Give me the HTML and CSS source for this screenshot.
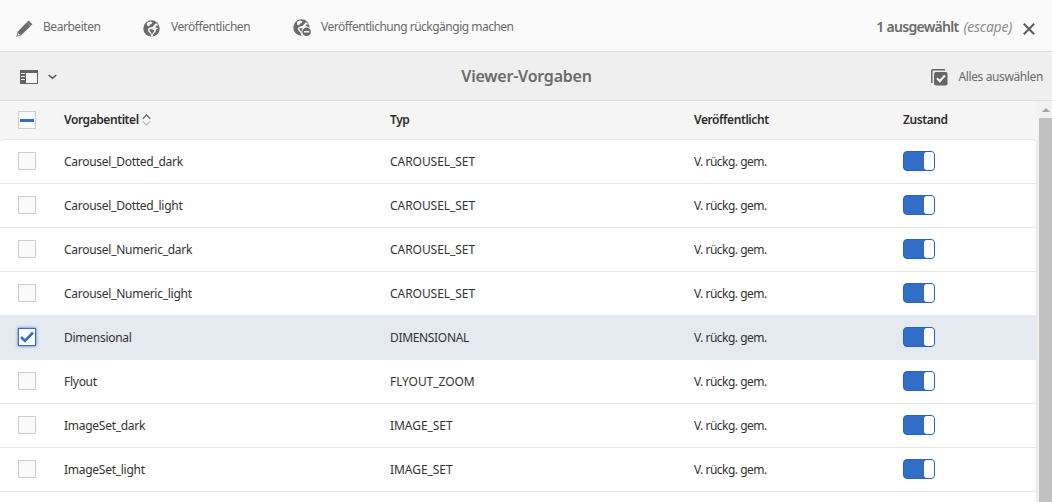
FILE: index.html
```html
<!DOCTYPE html>
<html lang="de">
<head>
<meta charset="utf-8">
<title>Viewer-Vorgaben</title>
<link rel="stylesheet" href="styles.css">
</head>
<body>
<svg class="defs" width="0" height="0">
  <defs>
    <g id="globe">
      <circle cx="8.5" cy="8.5" r="8.2" fill="#6b6b6b"/>
      <path d="M4.6 2.2 7.4 1.6 9.4 2.4 8.6 4 6.8 4.6 6.4 6 4.6 6.2 3.8 4.4Z" fill="#fafafa"/>
      <path d="M13 3.2 15.8 5.2 13.4 5.6 12.6 7.2 15.4 8.2 13.2 9.6 12.4 12 10.2 14.2 9.8 16.6 8.2 16.7 7.6 13.8 5.4 11.4 4.8 9 6.8 7.6 9.6 7 11.2 5Z" fill="#fafafa"/>
      <path d="M6.6 9 9 9.2 11.4 10.6 10 12.8 8.8 14.8 8.2 12.4 6.8 11Z" fill="#6b6b6b"/>
    </g>
  </defs>
</svg>
<header class="actions">
  <button class="action edit"><svg width="17" height="17" viewBox="0 0 17 17"><path d="M12.6.6 16.4 4.2 14.9 5.7 11 2.1ZM10.3 2.8 14.2 6.5 5.2 15.2.3 16.8 1.8 11.4Z" fill="#6b6b6b"/><path d="M11 2.1 14.9 5.7 14 6.6 10.2 2.9Z" fill="#6b6b6b"/><path d="M2.1 13 4.1 14.9 1.4 15.8Z" fill="#fafafa"/></svg><span>Bearbeiten</span></button>
  <button class="action publish"><svg width="17" height="17" viewBox="0 0 17 17"><use href="#globe"/></svg><span>Veröffentlichen</span></button>
  <button class="action unpublish"><svg width="19" height="18" viewBox="0 0 19 18"><use href="#globe"/><circle cx="13.6" cy="12.8" r="5.2" fill="#fafafa"/><circle cx="13.6" cy="12.8" r="4.3" fill="#6b6b6b"/><path d="M11 12.8H16.2" stroke="#fafafa" stroke-width="1.5"/></svg><span>Veröffentlichung rückgängig machen</span></button>
  <div class="selection"><strong>1 ausgewählt</strong><em>(escape)</em><svg width="12" height="12" viewBox="0 0 12 12"><path d="M.8.8 11.2 11.2M11.2.8.8 11.2" stroke="#5e5e5e" stroke-width="2"/></svg></div>
</header>
<div class="titlebar">
  <button class="rail"><svg width="18" height="14" viewBox="0 0 18 14"><path d="M0 0H18V14H0Z" fill="#626262"/><path d="M6 3H17V13H6Z" fill="#f5f5f5"/><path d="M1 3.5H5M1 6.5H5M1 9.5H5" stroke="#f0f0f0"/></svg><svg width="9" height="6" viewBox="0 0 9 6"><path d="M.7 1 4.5 4.3 8.3 1" fill="none" stroke="#555" stroke-width="1.6"/></svg></button>
  <h1>Viewer-Vorgaben</h1>
  <button class="all"><svg width="17" height="17" viewBox="0 0 17 17"><path d="M.8 14V2Q.8.8 2 .8H14" fill="none" stroke="#666" stroke-width="1.5"/><rect x="3" y="3" width="13.5" height="13.5" rx="2" fill="#666"/><path d="M6 9.3 8.7 12.2 13.9 6.5" fill="none" stroke="#fff" stroke-width="2"/></svg><span>Alles auswählen</span></button>
</div>
<main class="content">
  <div class="table">
    <div class="head row">
      <span class="check mixed"></span>
      <span class="sort">Vorgabentitel<svg width="9" height="12" viewBox="0 0 9 12"><path d="M.7 4.8 4.5 1 8.3 4.8" fill="none" stroke="#6b6b6b" stroke-width="1.3"/><path d="M.7 7.2 4.5 11 8.3 7.2" fill="none" stroke="#c2c2c2" stroke-width="1.3"/></svg></span>
      <span>Typ</span><span>Veröffentlicht</span><span>Zustand</span>
    </div>
    <div class="body">
      <div class="row"><span class="check"></span><span>Carousel_Dotted_dark</span><span class="type">CAROUSEL_SET</span><span class="pub">V. rückg. gem.</span><span class="switch"></span></div>
      <div class="row"><span class="check"></span><span>Carousel_Dotted_light</span><span class="type">CAROUSEL_SET</span><span class="pub">V. rückg. gem.</span><span class="switch"></span></div>
      <div class="row"><span class="check"></span><span>Carousel_Numeric_dark</span><span class="type">CAROUSEL_SET</span><span class="pub">V. rückg. gem.</span><span class="switch"></span></div>
      <div class="row"><span class="check"></span><span>Carousel_Numeric_light</span><span class="type">CAROUSEL_SET</span><span class="pub">V. rückg. gem.</span><span class="switch"></span></div>
      <div class="row selected"><span class="check checked"><svg width="14" height="12" viewBox="0 0 14 12"><path d="M1 6 5 10 13 1.5" fill="none" stroke="#326ec8" stroke-width="2.6"/></svg></span><span>Dimensional</span><span class="type narrow">DIMENSIONAL</span><span class="pub">V. rückg. gem.</span><span class="switch"></span></div>
      <div class="row"><span class="check"></span><span>Flyout</span><span class="type">FLYOUT_ZOOM</span><span class="pub">V. rückg. gem.</span><span class="switch"></span></div>
      <div class="row"><span class="check"></span><span>ImageSet_dark</span><span class="type">IMAGE_SET</span><span class="pub">V. rückg. gem.</span><span class="switch"></span></div>
      <div class="row"><span class="check"></span><span>ImageSet_light</span><span class="type">IMAGE_SET</span><span class="pub">V. rückg. gem.</span><span class="switch"></span></div>
      <div class="row"></div>
    </div>
  </div>
  <div class="scrollbar"><div class="up"><svg width="8" height="4" viewBox="0 0 8 4"><path d="M0 4 4 0 8 4Z" fill="#a3a3a3"/></svg></div><div class="thumb"></div></div>
</main>
</body>
</html>
```
FILE: styles.css
```css
* { box-sizing: border-box; }
body {
  margin: 0;
  height: 502px;
  overflow: hidden;
  display: flex;
  flex-direction: column;
  background: #f5f5f5;
  color: #323232;
  font: 12px/18px "Noto Sans", sans-serif;
  white-space: nowrap;
}
.defs { position: absolute; }
svg { display: block; flex: none; }
button {
  display: flex;
  align-items: center;
  border: 0;
  padding: 0;
  background: none;
  color: #6b6b6b;
  font: inherit;
}
.actions {
  display: flex;
  align-items: flex-start;
  height: 52px;
  flex: none;
  padding: 18px 17px 0 16px;
  background: #fafafa;
  border-bottom: 1px solid #dedede;
}
.action { height: 20px; }
.action span { margin-top: -2px; letter-spacing: -0.46px; }
.edit { width: 127px; gap: 10px; }
.publish { width: 150px; gap: 11px; }
.unpublish { gap: 9px; }
.unpublish span { letter-spacing: -0.5px; }
.selection {
  margin-left: auto;
  display: flex;
  align-items: center;
  height: 18px;
  color: #6b6b6b;
  font-size: 14px;
}
.selection strong { font-weight: 600; letter-spacing: -0.72px; }
.selection em { margin-left: 5px; color: #8e8e8e; letter-spacing: -0.25px; }
.selection svg { margin: 3px 0 0 11px; }
.titlebar {
  display: grid;
  grid-template-columns: 1fr auto 1fr;
  align-items: center;
  height: 49px;
  flex: none;
  padding: 0 9px 0 20px;
  background: #efefef;
  border-bottom: 1px solid #dedede;
}
.rail { gap: 10px; padding-top: 2px; }
.titlebar h1 {
  margin: 0;
  padding-right: 10px;
  color: #6b6b6b;
  font-size: 16px;
  font-weight: 600;
  letter-spacing: -0.22px;
}
.all { justify-self: end; gap: 10px; }
.all svg { margin-top: 2px; }
.all span { margin-top: 2px; letter-spacing: -0.38px; }
.content { display: flex; flex: 1; min-height: 0; }
.table { width: 1037px; display: flex; flex-direction: column; }
.row {
  display: grid;
  grid-template-columns: 46px 326px 304px 209px 1fr;
  align-items: center;
  height: 44px;
  flex: none;
  padding-left: 18px;
  border-bottom: 1px solid #e6e6e6;
  letter-spacing: -0.27px;
}
.head { height: 38px; border: 0; font-weight: 600; color: #2c2c2c; letter-spacing: -0.42px; }
.sort { display: flex; align-items: center; gap: 3px; }
.type { letter-spacing: -0.05px; }
.narrow { letter-spacing: -0.33px; }
.pub { letter-spacing: -0.5px; }
.body {
  flex: none;
  height: 380px;
  overflow: hidden;
  background: #fff;
  border: 1px solid #e6e6e6;
  border-left: 0;
  border-radius: 5px 5px 0 0;
}
.selected { background: #e5eaf1; border-color: #e5eaf1; box-shadow: 0 -1px #e5eaf1; }
.check {
  width: 18px;
  height: 18px;
  display: grid;
  place-items: center;
  background: #fafafa;
  border: 1px solid #cdcdcd;
}
.body .check, .switch { margin-bottom: 1px; }
.mixed::before { content: ""; width: 14px; height: 3px; background: #326ec8; }
.checked { background: #fff; border-color: #326ec8; box-shadow: 0 0 3px #326ec8; }
.switch {
  width: 32px;
  height: 20px;
  border: 1px solid #2463bd;
  border-radius: 4px;
  background: #326ec8;
  display: flex;
  justify-content: flex-end;
}
.switch::before { content: ""; width: 10px; background: #fff; border-radius: 3px; }
.scrollbar { width: 15px; padding-left: 2px; background: #f1f1f1; display: flex; flex-direction: column; }
.up { height: 17px; display: grid; place-items: center; }
.thumb { flex: 1; background: #c1c1c1; }
```
